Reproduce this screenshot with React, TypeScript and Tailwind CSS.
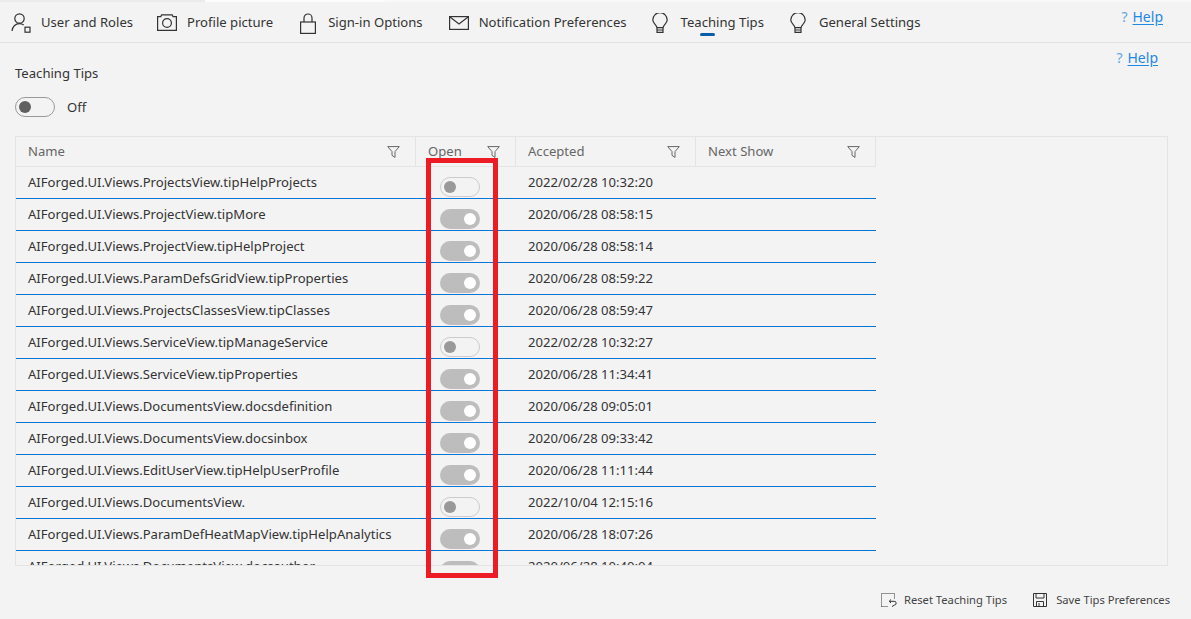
import React from 'react';

// ── Data ──────────────────────────────────────────────────────────────────────
const ROWS: { name: string; open: boolean; accepted: string }[] = [
  { name: 'AIForged.UI.Views.ProjectsView.tipHelpProjects', open: false, accepted: '2022/02/28 10:32:20' },
  { name: 'AIForged.UI.Views.ProjectView.tipMore', open: true, accepted: '2020/06/28 08:58:15' },
  { name: 'AIForged.UI.Views.ProjectView.tipHelpProject', open: true, accepted: '2020/06/28 08:58:14' },
  { name: 'AIForged.UI.Views.ParamDefsGridView.tipProperties', open: true, accepted: '2020/06/28 08:59:22' },
  { name: 'AIForged.UI.Views.ProjectsClassesView.tipClasses', open: true, accepted: '2020/06/28 08:59:47' },
  { name: 'AIForged.UI.Views.ServiceView.tipManageService', open: false, accepted: '2022/02/28 10:32:27' },
  { name: 'AIForged.UI.Views.ServiceView.tipProperties', open: true, accepted: '2020/06/28 11:34:41' },
  { name: 'AIForged.UI.Views.DocumentsView.docsdefinition', open: true, accepted: '2020/06/28 09:05:01' },
  { name: 'AIForged.UI.Views.DocumentsView.docsinbox', open: true, accepted: '2020/06/28 09:33:42' },
  { name: 'AIForged.UI.Views.EditUserView.tipHelpUserProfile', open: true, accepted: '2020/06/28 11:11:44' },
  { name: 'AIForged.UI.Views.DocumentsView.', open: false, accepted: '2022/10/04 12:15:16' },
  { name: 'AIForged.UI.Views.ParamDefHeatMapView.tipHelpAnalytics', open: true, accepted: '2020/06/28 18:07:26' },
  { name: 'AIForged.UI.Views.DocumentsView.docsauthor', open: true, accepted: '2020/06/28 10:40:04' },
];

// ── Icons ─────────────────────────────────────────────────────────────────────
function UserIcon() {
  return (
    <svg width="20" height="20" viewBox="0 0 20 20" fill="none" stroke="#333" strokeWidth="1.2">
      <circle cx="8.5" cy="5.5" r="4.7" />
      <path d="M1 18c.3-4.2 3.3-7.4 7.5-7.4 1.7 0 3.1.5 4.2 1.4" />
      <rect x="14" y="14.2" width="5" height="5" />
    </svg>
  );
}

function CameraIcon() {
  return (
    <svg width="20" height="17" viewBox="0 0 20 17" fill="none" stroke="#333" strokeWidth="1.2">
      <path d="M.6 2.6h3.2L4.6.8h10.6l.8 1.8h3.4v13.8H.6z" />
      <circle cx="10" cy="9" r="4.4" />
    </svg>
  );
}

function LockIcon() {
  return (
    <svg width="16" height="21" viewBox="0 0 16 21" fill="none" stroke="#333" strokeWidth="1.2">
      <path d="M4 9V5a4 4 0 0 1 8 0v4" />
      <rect x=".6" y="9" width="14.8" height="11.4" />
    </svg>
  );
}

function MailIcon() {
  return (
    <svg width="20" height="14" viewBox="0 0 20 14" fill="none" stroke="#333" strokeWidth="1.2">
      <rect x=".6" y=".6" width="18.8" height="12.8" />
      <path d="M1 1l9 7 9-7" />
    </svg>
  );
}

function BulbIcon() {
  return (
    <svg width="16" height="20" viewBox="0 0 16 20" fill="none" stroke="#333" strokeWidth="1.2">
      <path d="M5 14.6C4.6 11.8.8 10.4.8 6.9a7.2 7.2 0 0 1 14.4 0c0 3.5-3.8 4.9-4.2 7.7z" />
      <path d="M5 14.6v4.8h6v-4.8M5 17h6" />
    </svg>
  );
}

function FilterIcon() {
  return (
    <svg width="13" height="12" viewBox="0 0 13 12" fill="none" stroke="#666" strokeWidth="1">
      <path d="M.7.6h11.6L8 5.6v5.8l-3-2V5.6z" />
    </svg>
  );
}

function ResetIcon() {
  return (
    <svg width="16" height="14" viewBox="0 0 16 14" fill="none" stroke="#333" strokeWidth="1">
      <path d="M.5 13.5V.5H13.5V5.5M.5 13.5H7" strokeDasharray="1 1" />
      <path d="M10 6.5L8.2 8.3 10 10M8.5 8.3h4.6a1.9 1.9 0 0 1 .3 3.8L11 13.6" />
    </svg>
  );
}

function SaveIcon() {
  return (
    <svg width="14" height="14" viewBox="0 0 14 14" fill="none" stroke="#333" strokeWidth="1">
      <path d="M.5.5h13v13H.5z" />
      <path d="M3 .5v4.5h8V.5M3.5 13.5V8.5h7v5M6 10v3.5" />
    </svg>
  );
}

// ── Small parts ───────────────────────────────────────────────────────────────
function NavItem({ icon, label, iconBox, gap, active }: {
  icon: React.ReactNode; label: string; iconBox: string; gap: string; active?: boolean;
}) {
  return (
    <div className={`flex items-center ${gap}`}>
      <div className={`flex justify-center ${iconBox}`}>{icon}</div>
      <span className="relative text-[#333]">
        {label}
        {active && <span className="absolute left-[19px] top-[20px] h-[3px] w-[15px] rounded-full bg-[#0a5ea8]" />}
      </span>
    </div>
  );
}

function HelpLink() {
  return (
    <span className="text-[14px] text-[#1e88e5]">
      <span className="mr-[5px] text-[#5aa7e6]">?</span>
      <span className="underline underline-offset-2">Help</span>
    </span>
  );
}

function Toggle({ on }: { on: boolean }) {
  return on ? (
    <div className="flex h-[20px] w-[40px] items-center justify-end rounded-full bg-[#bdbdbd] pr-[4px]">
      <div className="h-[12px] w-[12px] rounded-full bg-white" />
    </div>
  ) : (
    <div className="flex h-[20px] w-[40px] items-center rounded-full border border-[#cccccc] pl-[3px]">
      <div className="h-[12px] w-[12px] rounded-full bg-[#999999]" />
    </div>
  );
}

function HeaderCell({ label, width }: { label: string; width: string }) {
  return (
    <div className={`flex items-center justify-between border-r border-[#e4e4e4] pl-[12px] pr-[15px] text-[#666] ${width}`}>
      <span>{label}</span>
      <FilterIcon />
    </div>
  );
}

// ── Page ──────────────────────────────────────────────────────────────────────
export default function App() {
  return (
    <div
      className="relative flex h-[619px] w-[1191px] flex-col overflow-hidden bg-[#f3f3f3] text-[13.1px]"
      style={{ fontFamily: '"Noto Sans", "Open Sans", sans-serif' }}
    >
      {/* Edge of the tab strip above */}
      <div className="flex h-[2px] shrink-0">
        <div className="w-[205px] bg-[#ebebeb]" />
        <div className="w-[180px] bg-[#fcfcfc]" />
        <div className="flex-1 bg-[#f9f9f9]" />
      </div>

      {/* Top tabs */}
      <div className="flex h-[41px] shrink-0 items-center justify-between border-b border-[#e2e2e2] pr-[28px] pt-[2px]">
        <div className="flex items-center pl-[11px]">
          <NavItem icon={<UserIcon />} label="User and Roles" iconBox="w-[20px]" gap="gap-[10px]" />
          <div className="ml-[24px]"><NavItem icon={<CameraIcon />} label="Profile picture" iconBox="w-[20px]" gap="gap-[10px]" /></div>
          <div className="ml-[27px]"><NavItem icon={<LockIcon />} label="Sign-in Options" iconBox="w-[16px]" gap="gap-[12px]" /></div>
          <div className="ml-[26px]"><NavItem icon={<MailIcon />} label="Notification Preferences" iconBox="w-[20px]" gap="gap-[10px]" /></div>
          <div className="ml-[25px]"><NavItem icon={<BulbIcon />} label="Teaching Tips" iconBox="w-[16px]" gap="gap-[13px]" active /></div>
          <div className="ml-[26px]"><NavItem icon={<BulbIcon />} label="General Settings" iconBox="w-[16px]" gap="gap-[13px]" /></div>
        </div>
        <div className="mb-[12px]"><HelpLink /></div>
      </div>

      {/* Body */}
      <div className="flex min-h-0 flex-1 flex-col px-[15px] pr-[23px]">
        <div className="flex h-[93px] shrink-0 justify-between">
          <div className="pt-[20px]">
            <p className="leading-[20px] text-[#333]">Teaching Tips</p>
            <div className="mt-[14px] flex items-center gap-[12px]">
              <div className="flex h-[20px] w-[40px] items-center rounded-full border border-[#999999] pl-[3px]">
                <div className="h-[12px] w-[12px] rounded-full bg-[#606060]" />
              </div>
              <span className="pt-[1px] text-[#333]">Off</span>
            </div>
          </div>
          <div className="pr-[10px] pt-[4px]"><HelpLink /></div>
        </div>

        {/* Grid panel */}
        <div className="h-[430px] shrink-0 overflow-hidden border border-[#e4e4e4]">
          <div className="flex h-[30px] w-[860px] border-b border-[#e4e4e4]">
            <HeaderCell label="Name" width="w-[400px]" />
            <HeaderCell label="Open" width="w-[100px]" />
            <HeaderCell label="Accepted" width="w-[180px]" />
            <HeaderCell label="Next Show" width="w-[180px]" />
          </div>
          {ROWS.map(row => (
            <div key={row.name} className="flex h-[32px] w-[860px] border-b border-[#0078d4] text-[#333]">
              <div className="w-[400px] pl-[12px] pt-[6px]">{row.name}</div>
              <div className="w-[100px] pl-[24px] pt-[10px]"><Toggle on={row.open} /></div>
              <div className="w-[180px] pl-[12px] pt-[6px]">{row.accepted}</div>
            </div>
          ))}
        </div>

        {/* Actions */}
        <div className="mr-[-2px] flex flex-1 items-start justify-end gap-[26px] pt-[26px] text-[11.2px] text-[#444]">
          <div className="flex items-center gap-[7px]"><ResetIcon /><span>Reset Teaching Tips</span></div>
          <div className="flex items-center gap-[9px]"><SaveIcon /><span>Save Tips Preferences</span></div>
        </div>
      </div>

      {/* Red annotation over the Open column */}
      <div className="absolute left-[426px] top-[158px] h-[420px] w-[72px] border-[5px] border-[#ed1c24]" />
    </div>
  );
}
